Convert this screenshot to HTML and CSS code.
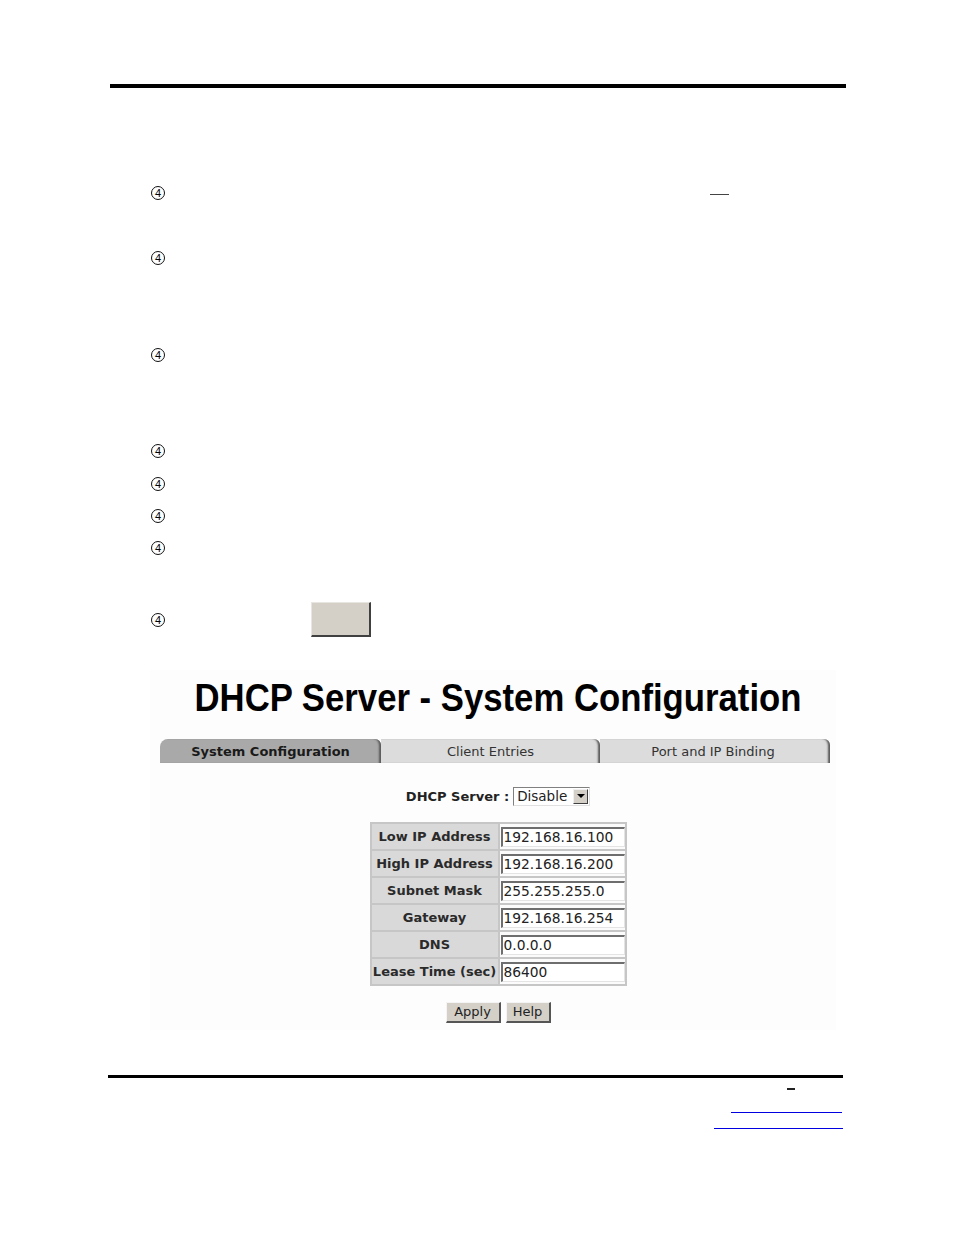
FILE: index.html
```html
<!DOCTYPE html>
<html>
<head>
<meta charset="utf-8">
<link rel="stylesheet" href="styles.css">
</head>
<body>
<div class="page">
  <div class="rule rule-top"></div>

  <div class="bullets">
    <div class="item h65"><span class="mark">4</span><span class="dash"></span></div>
    <div class="item h97"><span class="mark">4</span></div>
    <div class="item h96"><span class="mark">4</span></div>
    <div class="item h33"><span class="mark">4</span></div>
    <div class="item h32"><span class="mark">4</span></div>
    <div class="item h32"><span class="mark">4</span></div>
    <div class="item h65"><span class="mark">4</span></div>
    <div class="item last"><span class="mark">4</span><span class="bigbtn"></span></div>
  </div>

  <div class="shot">
    <h1 class="title">DHCP Server - System Configuration</h1>
    <div class="tabs">
      <div class="tab active w1">System Configuration</div>
      <div class="tab w2">Client Entries</div>
      <div class="tab w3">Port and IP Binding</div>
    </div>

    <div class="server-row">
      <span class="server-label">DHCP Server :</span>
      <span class="select"><span class="select-text">Disable</span><span class="select-arrow"><span class="tri"></span></span></span>
    </div>

    <table class="cfg">
      <tr><td class="lbl">Low IP Address</td><td class="val"><span class="input">192.168.16.100</span></td></tr>
      <tr><td class="lbl">High IP Address</td><td class="val"><span class="input">192.168.16.200</span></td></tr>
      <tr><td class="lbl">Subnet Mask</td><td class="val"><span class="input">255.255.255.0</span></td></tr>
      <tr><td class="lbl">Gateway</td><td class="val"><span class="input">192.168.16.254</span></td></tr>
      <tr><td class="lbl">DNS</td><td class="val"><span class="input">0.0.0.0</span></td></tr>
      <tr><td class="lbl">Lease Time (sec)</td><td class="val"><span class="input">86400</span></td></tr>
    </table>

    <div class="buttons">
      <span class="btn apply">Apply</span>
      <span class="btn help">Help</span>
    </div>
  </div>

  <div class="rule rule-bottom"></div>
  <div class="footer">
    <span class="fdash"></span>
    <span class="link l1"></span>
    <span class="link l2"></span>
  </div>
</div>
</body>
</html>
```

FILE: styles.css
```css
html, body {
  margin: 0;
  padding: 0;
  background: #ffffff;
}
.page {
  width: 954px;
  height: 1235px;
  overflow: hidden;
  font-family: "DejaVu Sans", Verdana, sans-serif;
}
.rule {
  background: #000000;
}
.rule-top {
  margin: 84px 0 0 110px;
  width: 736px;
  height: 4px;
}
.bullets {
  margin: 94px 0 0 151px;
  display: flex;
  flex-direction: column;
}
.item {
  display: flex;
  align-items: flex-start;
}
.h65 { height: 65px; }
.h97 { height: 97px; }
.h96 { height: 96px; }
.h33 { height: 33px; }
.h32 { height: 32px; }
.mark {
  display: block;
  width: 14px;
  height: 14px;
  margin-top: 4px;
  box-sizing: border-box;
  border: 1px solid #111;
  border-radius: 50%;
  line-height: 12px;
  text-align: center;
  font-size: 11px;
  font-family: "Liberation Sans", Arial, sans-serif;
  color: #000;
}
.dash {
  display: block;
  margin: 12px 0 0 545px;
  width: 19px;
  height: 1px;
  background: #444444;
}
.item.last {
  height: 35px;
  align-items: center;
}
.item.last .mark {
  margin-top: 0;
}
.bigbtn {
  display: block;
  margin-left: 146px;
  width: 57px;
  height: 32px;
  background: #d4d0c8;
  border-top: 1px solid #e8e6e0;
  border-left: 1px solid #e8e6e0;
  border-right: 2px solid #404040;
  border-bottom: 2px solid #404040;
}

/* embedded screenshot */
.shot {
  margin: 33px 0 0 150px;
  width: 676px;
  height: 360px;
  padding-left: 10px;
  background: #fdfdfd;
  display: flex;
  flex-direction: column;
  align-items: center;
}
.title {
  margin: 0;
  height: 56px;
  line-height: 56px;
  font-family: "Liberation Sans", Arial, sans-serif;
  font-weight: bold;
  font-size: 39px;
  color: #000;
  white-space: nowrap;
  transform: scaleX(0.89);
}
.tabs {
  margin-top: 13px;
  align-self: flex-start;
  display: flex;
  height: 24px;
}
.tab {
  height: 24px;
  line-height: 25px;
  text-align: center;
  font-size: 13px;
  color: #333;
  background: #dcdcdc;
  border-top-right-radius: 6px;
  box-shadow: inset -3px 0 2px -1px #5a5a5a;
  box-sizing: border-box;
}
.tab.active {
  background: #a9a9a9;
  font-weight: bold;
  color: #1a1a1a;
  border-top-left-radius: 8px;
}
.w1 { width: 221px; }
.w2 { width: 219px; }
.w3 { width: 230px; padding-right: 4px; }

.server-row {
  margin-top: 23px;
  height: 20px;
  display: flex;
  align-items: center;
  gap: 4px;
}
.server-label {
  font-size: 13px;
  font-weight: bold;
  color: #222;
}
.select {
  display: flex;
  align-items: center;
  width: 77px;
  height: 19px;
  box-sizing: border-box;
  border-top: 1px solid #808080;
  border-left: 1px solid #808080;
  border-right: 1px solid #e0e0e0;
  border-bottom: 1px solid #e0e0e0;
  background: #fff;
}
.select-text {
  flex: 1;
  font-size: 13.5px;
  color: #222;
  padding-left: 3px;
  line-height: 17px;
}
.select-arrow {
  width: 15px;
  height: 15px;
  margin-right: 1px;
  background: #d4d0c8;
  box-sizing: border-box;
  border-top: 1px solid #f0f0f0;
  border-left: 1px solid #f0f0f0;
  border-right: 1px solid #404040;
  border-bottom: 1px solid #404040;
  display: flex;
  align-items: center;
  justify-content: center;
}
.tri {
  width: 0;
  height: 0;
  border-left: 4px solid transparent;
  border-right: 4px solid transparent;
  border-top: 4px solid #000;
}

.cfg {
  margin-top: 16px;
  border-collapse: collapse;
  width: 257px;
}
.cfg td {
  border: 2px solid #c6c6c6;
  height: 25px;
  padding: 0;
}
.lbl {
  width: 126px;
  background: #d9d9d9;
  text-align: center;
  font-size: 13px;
  font-weight: bold;
  color: #2a2a2a;
  white-space: nowrap;
}
.val {
  width: 125px;
  background: #fbfbfb;
}
.input {
  display: block;
  width: 124px;
  height: 20px;
  box-sizing: border-box;
  margin-left: 1px;
  border-top: 2px solid #6e6e6e;
  border-left: 2px solid #6e6e6e;
  border-right: 1px solid #e4e4e4;
  border-bottom: 1px solid #e4e4e4;
  background: #fff;
  font-size: 13.8px;
  line-height: 17px;
  padding-left: 1px;
  color: #222;
  white-space: nowrap;
}

.buttons {
  margin-top: 16px;
  display: flex;
  gap: 5px;
}
.btn {
  display: block;
  height: 21px;
  box-sizing: border-box;
  background: #d4d0c8;
  border-top: 1px solid #f4f4f4;
  border-left: 1px solid #f4f4f4;
  border-right: 2px solid #555;
  border-bottom: 2px solid #555;
  font-size: 13px;
  line-height: 18px;
  text-align: center;
  color: #222;
}
.apply { width: 55px; }
.help { width: 45px; }

.rule-bottom {
  margin: 45px 0 0 108px;
  width: 735px;
  height: 3px;
}
.footer {
  width: 843px;
  display: flex;
  flex-direction: column;
  align-items: flex-end;
}
.fdash {
  display: block;
  margin: 10px 48px 0 0;
  width: 8px;
  height: 2px;
  background: #222;
}
.link {
  display: block;
  height: 1px;
  background: #0000e0;
}
.l1 {
  margin-top: 22px;
  width: 111px;
  margin-right: 1px;
}
.l2 {
  margin-top: 15px;
  width: 129px;
}
```
